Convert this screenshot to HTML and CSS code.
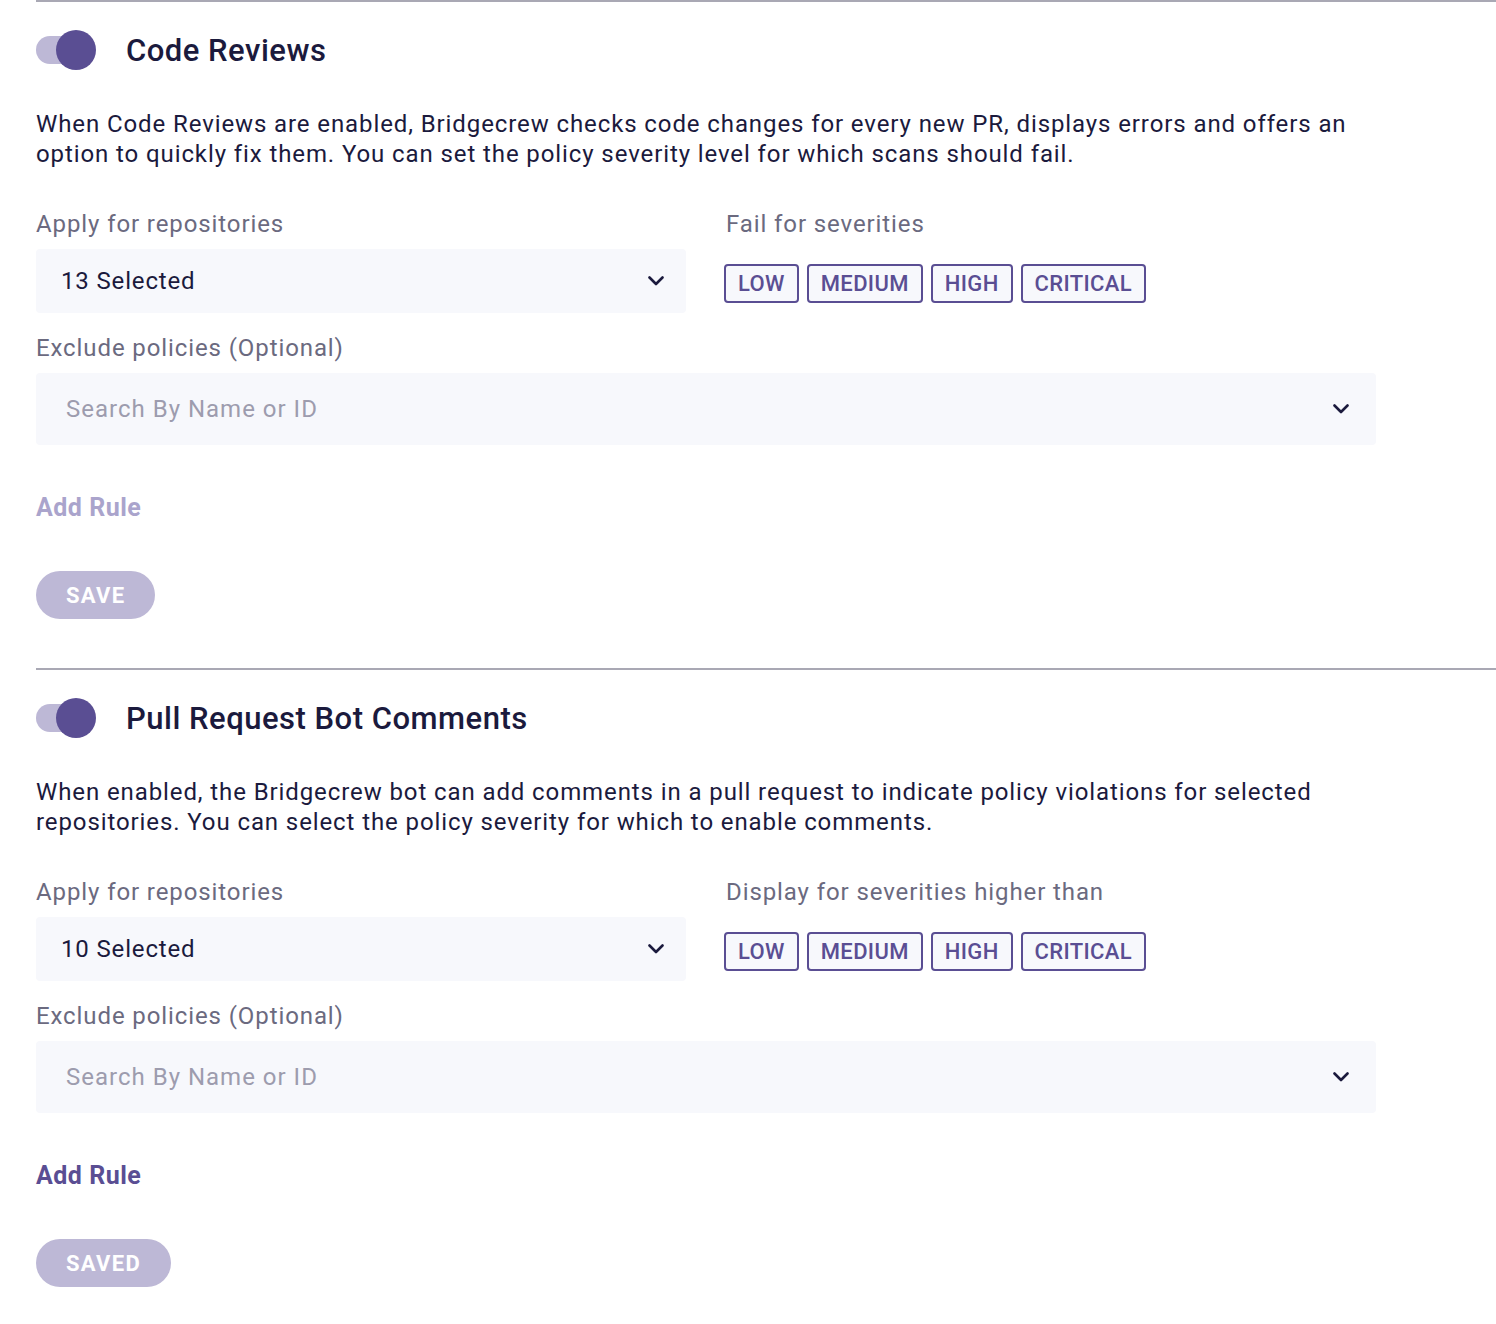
FILE: index.html
```html
<!DOCTYPE html>
<html lang="en">
<head>
    <meta charset="utf-8">
    <meta name="viewport" content="width=device-width, initial-scale=1.0">
    <title>Integrations - Code Reviews</title>
    <link rel="stylesheet" href="styles.css">
</head>
<body>
    <div class="settings">
        <!-- Code Reviews -->
        <section class="setting-section">
            <div class="setting-header">
                <span class="toggle is-on"><span class="toggle-knob"></span></span>
                <h2 class="setting-title">Code Reviews</h2>
            </div>
            <p class="setting-desc">When Code Reviews are enabled, Bridgecrew checks code changes for every new PR, displays errors and offers an option to quickly fix them. You can set the policy severity level for which scans should fail.</p>

            <div class="form-grid">
                <div class="form-group">
                    <label class="form-label">Apply for repositories</label>
                    <div class="select-box">
                        <span class="select-value">13 Selected</span>
                        <svg class="chevron" viewBox="0 0 16 10" width="16" height="10"><polyline points="1.5 1.5 8 8 14.5 1.5"/></svg>
                    </div>
                </div>
                <div class="form-group">
                    <label class="form-label">Fail for severities</label>
                    <div class="severity-list">
                        <span class="severity-chip">LOW</span>
                        <span class="severity-chip">MEDIUM</span>
                        <span class="severity-chip">HIGH</span>
                        <span class="severity-chip">CRITICAL</span>
                    </div>
                </div>
                <div class="form-group form-group-wide">
                    <label class="form-label">Exclude policies (Optional)</label>
                    <div class="select-box select-search">
                        <span class="select-placeholder">Search By Name or ID</span>
                        <svg class="chevron" viewBox="0 0 16 10" width="16" height="10"><polyline points="1.5 1.5 8 8 14.5 1.5"/></svg>
                    </div>
                </div>
            </div>

            <a class="add-rule is-disabled">Add Rule</a>
            <div><button class="save-btn">SAVE</button></div>
        </section>

        <!-- Pull Request Bot Comments -->
        <section class="setting-section">
            <div class="setting-header">
                <span class="toggle is-on"><span class="toggle-knob"></span></span>
                <h2 class="setting-title">Pull Request Bot Comments</h2>
            </div>
            <p class="setting-desc">When enabled, the Bridgecrew bot can add comments in a pull request to indicate policy violations for selected repositories. You can select the policy severity for which to enable comments.</p>

            <div class="form-grid">
                <div class="form-group">
                    <label class="form-label">Apply for repositories</label>
                    <div class="select-box">
                        <span class="select-value">10 Selected</span>
                        <svg class="chevron" viewBox="0 0 16 10" width="16" height="10"><polyline points="1.5 1.5 8 8 14.5 1.5"/></svg>
                    </div>
                </div>
                <div class="form-group">
                    <label class="form-label">Display for severities higher than</label>
                    <div class="severity-list">
                        <span class="severity-chip">LOW</span>
                        <span class="severity-chip">MEDIUM</span>
                        <span class="severity-chip">HIGH</span>
                        <span class="severity-chip">CRITICAL</span>
                    </div>
                </div>
                <div class="form-group form-group-wide">
                    <label class="form-label">Exclude policies (Optional)</label>
                    <div class="select-box select-search">
                        <span class="select-placeholder">Search By Name or ID</span>
                        <svg class="chevron" viewBox="0 0 16 10" width="16" height="10"><polyline points="1.5 1.5 8 8 14.5 1.5"/></svg>
                    </div>
                </div>
            </div>

            <a class="add-rule">Add Rule</a>
            <div><button class="save-btn">SAVED</button></div>
        </section>
    </div>
</body>
</html>
```

FILE: styles.css
```css
body {
    margin: 0;
    background-color: #fff;
    font-family: Roboto, "Noto Sans", Arial, sans-serif;
    color: #1b1a3d;
}

.settings {
    padding-left: 36px;
}

/* Secciones */
.setting-section {
    border-top: 2px solid #a9a8b4;
    padding-bottom: 49px;
}

.setting-header {
    display: flex;
    align-items: center;
    gap: 30px;
    height: 40px;
    margin-top: 28px;
}

.setting-title {
    margin: 0;
    font-size: 31px;
    font-weight: 500;
    letter-spacing: 0.5px;
    color: #1b1a3d;
}

.toggle {
    position: relative;
    display: inline-block;
    width: 60px;
    height: 40px;
    flex-shrink: 0;
}

.toggle::before {
    content: "";
    position: absolute;
    left: 0;
    top: 6px;
    width: 54px;
    height: 28px;
    border-radius: 14px;
    background-color: #bdb8d6;
}

.toggle-knob {
    position: absolute;
    right: 0;
    top: 0;
    width: 40px;
    height: 40px;
    border-radius: 50%;
    background-color: #5a4e93;
}

.setting-desc {
    max-width: 1340px;
    margin: 39px 0 0;
    font-size: 24px;
    line-height: 30px;
    letter-spacing: 0.9px;
}

/* Formulario */
.form-grid {
    display: grid;
    grid-template-columns: 650px 650px;
    column-gap: 40px;
    row-gap: 20px;
    margin-top: 40px;
}

.form-group-wide {
    grid-column: 1 / 3;
}

.form-label {
    display: block;
    margin-bottom: 10px;
    font-size: 24px;
    line-height: 30px;
    letter-spacing: 0.9px;
    color: #6b6a7f;
}

.select-box {
    display: flex;
    align-items: center;
    justify-content: space-between;
    height: 64px;
    padding: 0 22px 0 25px;
    background-color: #f7f8fc;
    border-radius: 4px;
    font-size: 24px;
    letter-spacing: 0.85px;
}

.select-search {
    height: 72px;
    padding: 0 27px 0 30px;
    letter-spacing: 1px;
}

.select-value {
    color: #1b1a3d;
}

.select-placeholder {
    color: #9d9cae;
}

.chevron {
    fill: none;
    stroke: #1b1a3d;
    stroke-width: 2.6;
    stroke-linecap: round;
    stroke-linejoin: round;
}

.severity-list {
    display: flex;
    align-items: center;
    gap: 8px;
    height: 64px;
    margin-left: -2px;
    padding-top: 4px;
    box-sizing: border-box;
}

.severity-chip {
    display: inline-flex;
    align-items: center;
    height: 39px;
    padding: 0 12px;
    box-sizing: border-box;
    border: 2px solid #5a4e93;
    border-radius: 4px;
    background-color: #f7f8fc;
    color: #5a4e93;
    font-size: 22px;
    font-weight: 500;
    letter-spacing: 0.35px;
}

/* Acciones */
.add-rule {
    display: inline-block;
    margin-top: 48px;
    font-size: 25px;
    line-height: 30px;
    font-weight: 700;
    letter-spacing: 0.5px;
    color: #5a4e93;
    cursor: pointer;
}

.add-rule.is-disabled {
    color: #aaa4cc;
}

.save-btn {
    margin-top: 48px;
    height: 48px;
    padding: 0 30px;
    border: none;
    border-radius: 24px;
    background-color: #bdb8d6;
    color: #fff;
    font-family: Roboto, "Noto Sans", Arial, sans-serif;
    font-size: 22px;
    font-weight: 700;
    letter-spacing: 1.3px;
}
```
